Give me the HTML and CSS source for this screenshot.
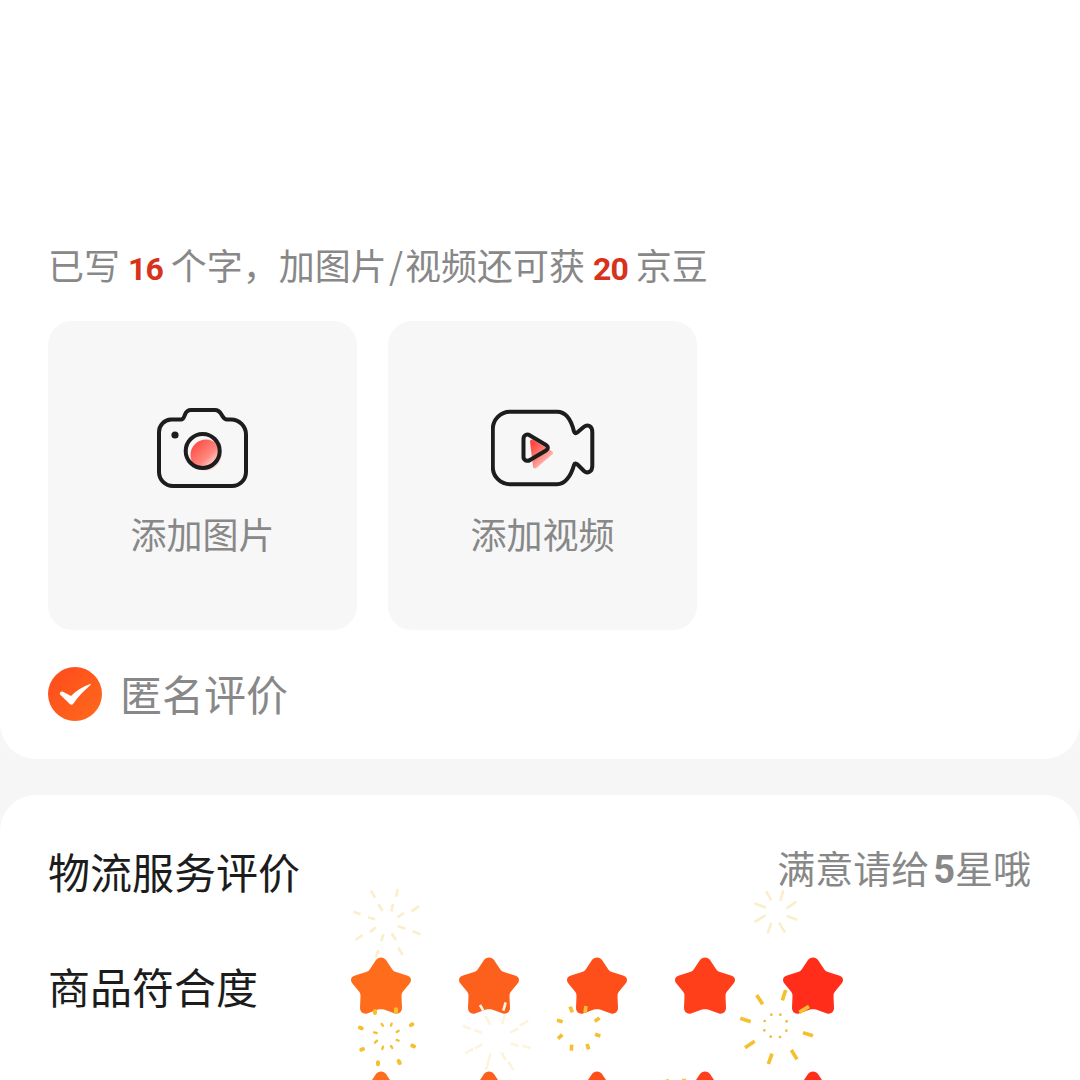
FILE: index.html
```html
<!DOCTYPE html>
<html lang="zh-CN">
<head>
<meta charset="utf-8">
<title>评价</title>
<link rel="stylesheet" href="styles.css">
</head>
<body>
<svg class="defs" aria-hidden="true">
  <symbol id="star" viewBox="0 0 60 58">
    <path d="M30 0.5C32 0.5 34 1.5 35 3L41 12C42 13.5 43 14.5 45 15L56 18.5C60 19.5 61 23 59 26L52 34.5C51 36 50.5 37 50.5 39L51 51C51 55 47.5 57.5 44 56.5L33 52.5C31 52 29 52 27 52.5L16 56.5C12.5 57.5 9 55 9 51L9.5 39C9.5 37 9 36 8 34.5L1 26C-1 23 0 19.5 4 18.5L15 15C17 14.5 18 13.5 19 12L25 3C26 1.5 28 0.5 30 0.5Z"/>
  </symbol>
</svg>
<div class="page">
  <section class="card review">
    <p class="hint">已写 <b>16</b> 个字，加图片<span class="slash">/</span>视频还可获 <b>20</b> 京豆</p>
    <div class="tiles">
      <div class="tile">
        <svg class="icon-camera" viewBox="0 0 92 80">
          <defs>
            <linearGradient id="lensFill" x1="0.15" y1="0.15" x2="0.9" y2="0.9">
              <stop offset="0" stop-color="#ff5048"/>
              <stop offset="0.55" stop-color="#ff8a80"/>
              <stop offset="1" stop-color="#ffdcd8" stop-opacity="0.5"/>
            </linearGradient>
            <linearGradient id="playFill" x1="0.1" y1="0.1" x2="0.8" y2="1">
              <stop offset="0" stop-color="#ff4a42"/>
              <stop offset="0.55" stop-color="#ff8d84"/>
              <stop offset="1" stop-color="#ffd0cc"/>
            </linearGradient>
          </defs>
          <circle cx="49" cy="47" r="15.5" fill="url(#lensFill)"/>
          <path class="ink" d="M14 11.5H24C26.5 11.5 27 9 28 6.5C29 4 31 2 34 2H58C61 2 63 4 64.5 6.5C66 9 67 11.5 70 11.5H74A15 15 0 0 1 89 26.5V64A14 14 0 0 1 75 78H16A14 14 0 0 1 2 64V24A12.5 12.5 0 0 1 14 11.5Z"/>
          <circle class="ink" cx="45.7" cy="43" r="17"/>
          <circle class="ink-dot" cx="18" cy="27" r="3.6"/>
        </svg>
        <span class="tile-label">添加图片</span>
      </div>
      <div class="tile">
        <svg class="icon-video" viewBox="0 0 104 80">
          <path class="play-shade" d="M41 33.5L60 45L44 58.5Z"/>
          <path class="ink" d="M19 3.7H66C74 3.7 80 11 83 23.5C83.6 25.6 85 25.6 86.5 24.3L93 18.8C96.5 16 101.3 18 101.3 23.7V58C101.3 63.7 96.5 66 93 63L86.5 56.5C85 55 83.6 55 83 57C80 68 74 76.3 66 76.3H19A17.3 17.3 0 0 1 1.8 59V21A17.3 17.3 0 0 1 19 3.7Z"/>
          <path class="ink" d="M32.5 31C32.5 27 36 25.5 39 27.5L55 37C57.5 38.5 57.5 41 55 42.5L39 52C36 54 32.5 52 32.5 49Z"/>
        </svg>
        <span class="tile-label">添加视频</span>
      </div>
    </div>
    <div class="anon">
      <svg class="icon-check" viewBox="0 0 54 54">
        <defs>
          <linearGradient id="checkFill" x1="0" y1="0" x2="1" y2="1">
            <stop offset="0" stop-color="#fe4a1c"/>
            <stop offset="1" stop-color="#ff6a1c"/>
          </linearGradient>
        </defs>
        <circle cx="27" cy="27" r="27" fill="url(#checkFill)"/>
        <path d="M12 27.5C11.3 25.6 12.6 24 14.5 24.5L23 29C28 24 35 19.5 42 17C42.8 16.8 43 17.5 42.5 18C36 24 29.5 30 25.5 36.5C24.5 38 22.7 38 21.8 37Z" fill="#fff"/>
      </svg>
      <span class="anon-label">匿名评价</span>
    </div>
  </section>

  <section class="card ratings">
    <div class="ratings-head">
      <h2 class="title">物流服务评价</h2>
      <span class="tip">满意请给<b>5</b>星哦</span>
    </div>
    <div class="rate-row">
      <span class="rate-label">商品符合度</span>
      <div class="stars">
        <svg class="star s1"><use href="#star"/></svg>
        <svg class="star s2"><use href="#star"/></svg>
        <svg class="star s3"><use href="#star"/></svg>
        <svg class="star s4"><use href="#star"/></svg>
        <svg class="star s5"><use href="#star"/></svg>
      </div>
    </div>
    <div class="rate-row">
      <span class="rate-label"></span>
      <div class="stars">
        <svg class="star s1"><use href="#star"/></svg>
        <svg class="star s2"><use href="#star"/></svg>
        <svg class="star s3"><use href="#star"/></svg>
        <svg class="star s4"><use href="#star"/></svg>
        <svg class="star s5"><use href="#star"/></svg>
      </div>
    </div>

    <svg class="spark spark-left" viewBox="0 0 810 600">
      <g class="pale">
        <path d="M93 32L105 53M173 27L169 50M237 78L214 95M241 163L218 154M68 165L46 180M62 103L40 95M188 225L175 203M115 210L108 232"/>
        <path d="M115 72L128 93M159 72L154 94M192 99L172 112M196 146L173 138M108 142L90 157M105 118L84 112M168 180L155 160M130 162L124 184"/>
      </g>
      <g class="paler">
        <path d="M420 375L430 392M437 408L450 434M497 367L490 392M495 405L486 432M565 422L540 437M535 445L510 458M572 505L548 497M535 497L512 490M520 570L505 545M497 540L485 518M452 520L445 545M445 545L438 570M375 520L400 507M405 505L427 493M368 437L392 447M403 450L426 459"/>
      </g>
      <g class="gold thick">
        <path d="M60 443L65 445M213 435L217 433M217 497L222 499M64 509L69 507M114 547L114 553M176 543L179 549M105 393L105 399M168 388L168 396"/>
      </g>
      <g class="gold bar">
        <path d="M690 380L697 397M738 378L735 398M779 414L764 424M781 468L765 463M741 492L746 508M695 494L694 512M667 464L654 476M668 425L651 421"/>
      </g>
      <g class="gold thin">
        <path d="M125 432L129 437M155 431L153 437M176 452L170 456M176 482L170 480M153 498L157 504M129 500L127 507M111 482L105 488M110 459L102 457"/>
      </g>
    </svg>
    <svg class="spark spark-right" viewBox="0 0 810 600">
      <g class="pale">
        <path d="M468 33L484 62M520 30L511 63M559 65L530 85M562 119L530 108M525 158L507 128M484 128L473 160M466 106L434 126M468 83L433 70"/>
      </g>
      <g class="gold bar">
        <path d="M440 345L458 373M527 330L517 361M597 379L568 397M609 467L579 458M561 538L544 510M486 521L475 552M434 484L405 503M422 425L391 415"/>
        <path d="M170 598L172 604M222 596L222 604"/>
      </g>
      <g class="gold-dots">
        <circle cx="484" cy="404" r="4"/><circle cx="511" cy="404" r="4"/><circle cx="530" cy="424" r="4"/><circle cx="529" cy="452" r="4"/><circle cx="510" cy="471" r="4"/><circle cx="482" cy="470" r="4"/><circle cx="463" cy="451" r="4"/><circle cx="464" cy="423" r="4"/>
      </g>
    </svg>
  </section>
</div>
</body>
</html>
```

FILE: styles.css
```css
html, body {
  margin: 0;
  padding: 0;
  background: #f6f6f6;
}

.defs {
  position: absolute;
  width: 0;
  height: 0;
}

.page {
  width: 1080px;
  height: 1080px;
  overflow: hidden;
  display: flex;
  flex-direction: column;
  gap: 36px;
  font-family: "Noto Sans CJK SC", "Noto Sans", sans-serif;
  color: #1c1c1c;
}

.card {
  background: #fff;
  flex: none;
}

.review {
  height: 759px;
  box-sizing: border-box;
  padding: 242px 48px 0;
  border-radius: 0 0 36px 36px;
}

.hint {
  margin: 0;
  height: 50px;
  font-size: 36px;
  line-height: 45px;
  color: #888;
  white-space: nowrap;
}

.hint b {
  font-family: "Roboto", sans-serif;
  font-size: 32px;
  font-weight: 700;
  letter-spacing: -1px;
  color: #d9321c;
}

.slash {
  margin: 0 2px;
}

.tiles {
  display: flex;
  gap: 31px;
  margin-top: 29px;
}

.tile {
  width: 309px;
  height: 309px;
  border-radius: 24px;
  background: #f7f7f7;
  display: flex;
  flex-direction: column;
  align-items: center;
}

.ink {
  fill: none;
  stroke: #1d1d1d;
  stroke-width: 4;
  stroke-linejoin: round;
}

.ink-dot {
  fill: #1d1d1d;
}

.play-shade {
  fill: url(#playFill);
  stroke: url(#playFill);
  stroke-width: 4;
  stroke-linejoin: round;
}

.icon-camera {
  width: 92px;
  height: 80px;
  margin-top: 87px;
}

.icon-video {
  width: 104px;
  height: 80px;
  margin-top: 87px;
}

.tile-label {
  margin-top: 19px;
  font-size: 36px;
  line-height: 52px;
  color: #888;
}

.anon {
  display: flex;
  align-items: center;
  gap: 18px;
  margin-top: 37px;
}

.icon-check {
  width: 54px;
  height: 54px;
  flex: none;
}

.anon-label {
  margin-bottom: 3px;
  font-size: 42px;
  line-height: 50px;
  color: #888;
}

.ratings {
  position: relative;
  height: 400px;
  padding: 0 49px 0 48px;
  border-radius: 36px 36px 0 0;
}

.ratings-head {
  display: flex;
  justify-content: space-between;
  align-items: center;
  height: 60px;
  padding-top: 46px;
}

.title {
  margin: 0;
  font-size: 42px;
  font-weight: 400;
  line-height: 60px;
}

.tip {
  margin-bottom: 5px;
  font-size: 38px;
  line-height: 55px;
  color: #888;
  white-space: nowrap;
}

.tip b {
  margin-left: 4px;
  font-family: "Roboto", "Noto Sans", sans-serif;
  font-weight: 700;
}

.rate-row {
  display: flex;
  align-items: center;
  height: 58px;
  margin-top: 56px;
}

.rate-label {
  width: 303px;
  flex: none;
  font-size: 42px;
  line-height: 58px;
  white-space: nowrap;
}

.stars {
  display: flex;
  gap: 48px;
}

.star {
  width: 60px;
  height: 58px;
  flex: none;
  fill: currentColor;
}

.s1 { color: #ff6d1c; }
.s2 { color: #fd5f1c; }
.s3 { color: #fe4f1a; }
.s4 { color: #fe3f1a; }
.s5 { color: #ff2d1a; }

.spark {
  position: absolute;
  top: 85px;
  width: 270px;
  height: 200px;
  pointer-events: none;
}

.spark-left { left: 340px; }
.spark-right { left: 610px; }

.spark path {
  fill: none;
}

.pale path {
  stroke: #faeecb;
  stroke-width: 8;
}

.paler path {
  stroke: #fcf4dd;
  stroke-width: 8;
}

.gold path {
  stroke: #f5c02f;
}

.thick path {
  stroke-width: 12;
  stroke-linecap: round;
}

.thin path {
  stroke-width: 7;
  stroke-linecap: round;
}

.bar path {
  stroke-width: 11;
  stroke-linecap: butt;
}

.gold-dots circle {
  fill: #eebb3a;
}
```
